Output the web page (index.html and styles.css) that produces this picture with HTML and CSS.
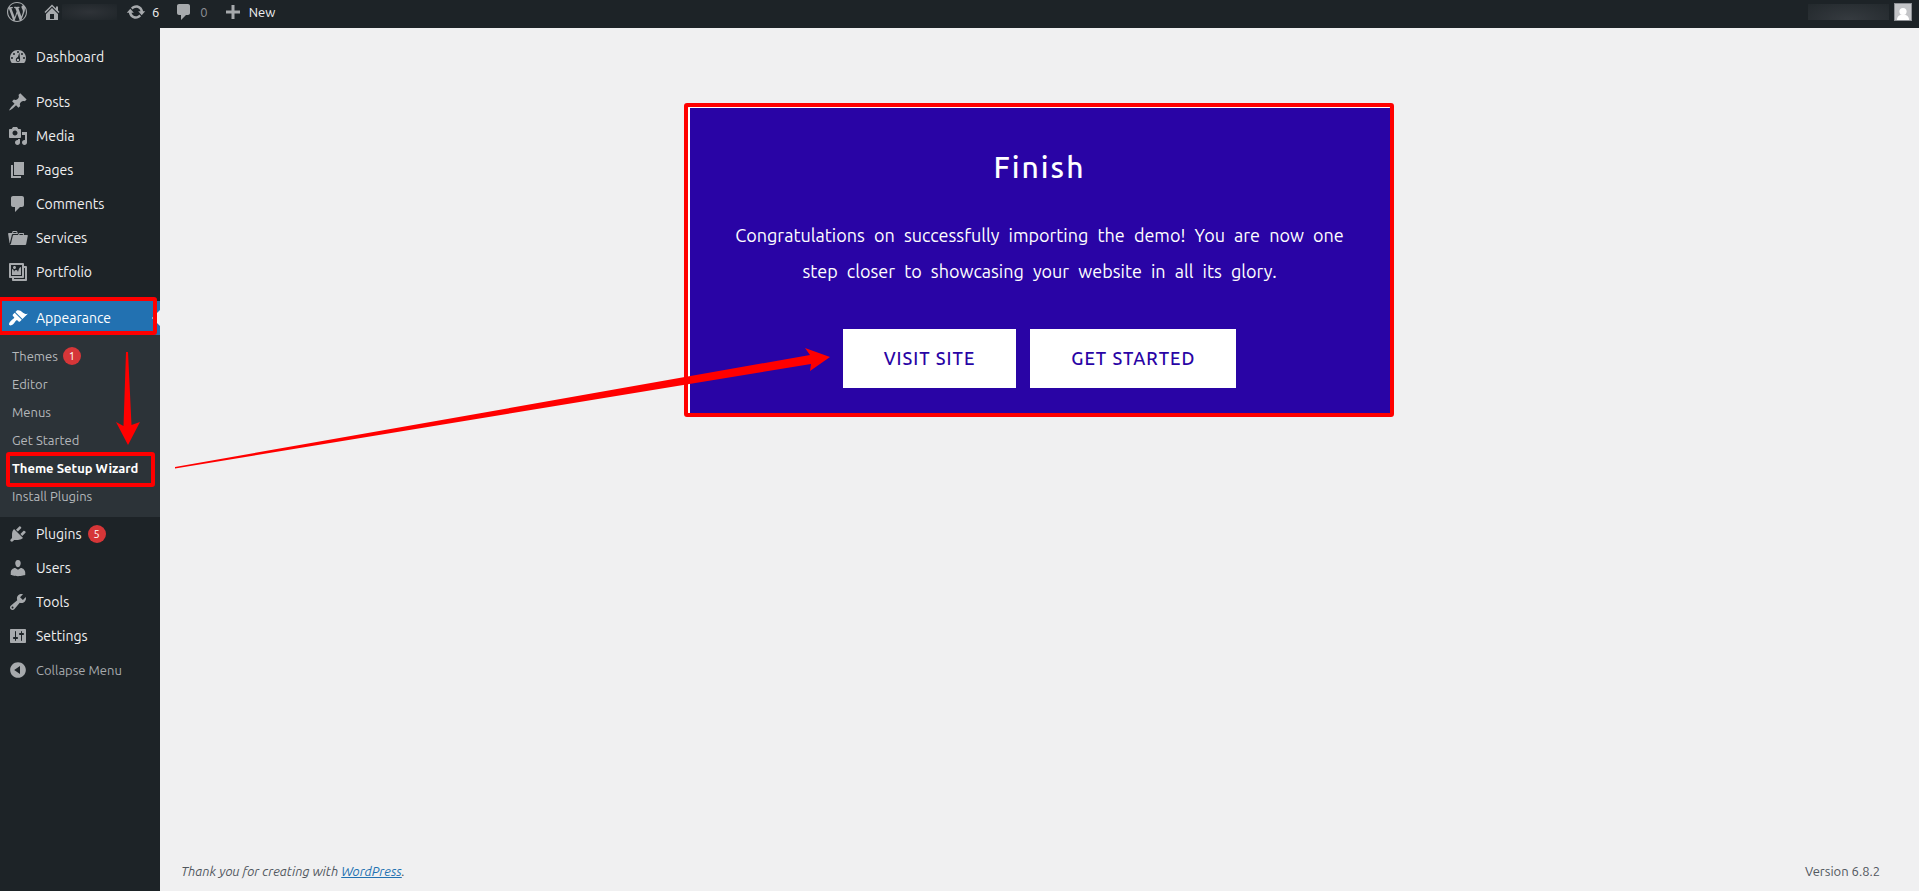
FILE: index.html
```html
<!DOCTYPE html>
<html lang="en">
  <head>
    <meta charset="UTF-8" />
    <meta name="viewport" content="width=device-width, initial-scale=1.0" />
    <title>Theme Setup Wizard</title>
    <link rel="stylesheet" href="styles.css" />
  </head>
  <body>
    <header class="adminbar">
      <a class="bar-item" href="#about" aria-label="About WordPress">
        <svg class="icon" viewBox="0 0 20 20"><path d="M20 10c0-5.51-4.49-10-10-10C4.48 0 0 4.49 0 10c0 5.52 4.48 10 10 10 5.51 0 10-4.48 10-10zM7.78 15.37L4.37 6.22c.55-.02 1.17-.08 1.17-.08.5-.06.44-1.13-.06-1.11 0 0-1.45.11-2.37.11-.18 0-.37 0-.58-.01C4.12 2.69 6.87 1.11 10 1.11c2.33 0 4.45.87 6.05 2.34-.68-.11-1.65.39-1.65 1.58 0 .74.45 1.36.9 2.1.35.61.55 1.36.55 2.46 0 1.49-1.4 5-1.4 5l-3.03-8.37c.54-.02.82-.17.82-.17.5-.05.44-1.25-.06-1.22 0 0-1.44.12-2.38.12-.87 0-2.33-.12-2.33-.12-.5-.03-.56 1.2-.06 1.22l.92.08 1.26 3.41zM17.41 10c.24-.64.74-1.87.43-4.25.7 1.29 1.05 2.71 1.05 4.25 0 3.29-1.73 6.24-4.4 7.78.97-2.59 1.94-5.2 2.92-7.78zM6.1 18.09C3.12 16.65 1.11 13.53 1.11 10c0-1.3.23-2.48.72-3.59C3.25 10.3 4.67 14.2 6.1 18.09zm4.03-6.63l2.58 6.98c-.86.29-1.76.45-2.71.45-.79 0-1.57-.11-2.29-.33.81-2.38 1.62-4.74 2.42-7.1z"/></svg>
      </a>
      <a class="bar-item bar-site" href="#site" aria-label="Visit site">
        <svg class="icon" viewBox="0 0 20 20"><path fill-rule="evenodd" d="M16 8.5l1.53 1.53-1.06 1.06L10 4.6l-6.47 6.49-1.06-1.06L10 2.5l4 4v-2h2v4zm-6-2.46l6 5.99V18H4v-5.97zM12 17v-5H8v5h4z"/></svg>
        <span class="redacted"></span>
      </a>
      <a class="bar-item" href="#updates">
        <svg class="icon" viewBox="0 0 20 20"><path d="M10.2 3.28c3.53 0 6.43 2.61 6.92 6h2.08l-3.5 4-3.5-4h2.32c-.45-1.97-2.21-3.45-4.32-3.45-1.45 0-2.73.71-3.54 1.78L4.95 5.66C6.23 4.2 8.11 3.28 10.2 3.28zm-.4 13.44c-3.52 0-6.43-2.61-6.92-6H.8l3.5-4c1.17 1.33 2.33 2.67 3.5 4H5.48c.45 1.97 2.21 3.45 4.32 3.45 1.45 0 2.73-.71 3.54-1.78l1.71 1.95c-1.28 1.46-3.15 2.38-5.25 2.38z"/></svg>
        <span>6</span>
      </a>
      <a class="bar-item" href="#comments">
        <svg class="icon" viewBox="0 0 20 20"><path d="M5 2h9c1.1 0 2 .9 2 2v7c0 1.1-.9 2-2 2h-2l-5 5v-5H5c-1.1 0-2-.9-2-2V4c0-1.1.9-2 2-2z"/></svg>
        <span class="muted">0</span>
      </a>
      <a class="bar-item" href="#new">
        <svg class="icon" viewBox="0 0 20 20"><path d="M17 8.5v3h-5.500v5.500h-3v-5.500H3v-3h5.500V3h3v5.500z"/></svg>
        <span>New</span>
      </a>
      <a class="bar-account" href="#profile" aria-label="Profile">
        <span class="redacted redacted-name"></span>
        <svg class="avatar" viewBox="0 0 18 18"><path fill="#8c8f94" d="M0 0h18v18H0z"/><path fill="#c3c4c7" d="M1 1h16v16H1z"/><circle cx="9" cy="8.500" r="3.600" fill="#fff"/><path fill="#fff" d="M3 17c0-4 3-5.500 6-5.500s6 1.500 6 5.500z"/></svg>
      </a>
    </header>

    <div class="layout">
      <nav class="sidebar">
        <ul class="menu">
          <li>
            <a class="menu-link" href="#dashboard">
              <svg class="icon" viewBox="0 0 20 20"><path fill-rule="evenodd" d="M3.760 16h12.480A7.900 7.900 0 0 0 18 11c0-4.500-3.600-8-8-8s-8 3.500-8 8c0 1.900.7 3.600 1.760 5zM10 4a1 1 0 1 1 0 2 1 1 0 0 1 0-2zM6 6a1 1 0 1 1 0 2 1 1 0 0 1 0-2zm8 0a1 1 0 1 1 0 2 1 1 0 0 1 0-2zm-2.600-.4L12 11.300c.5 2.300-.5 3.700-2 3.700s-2.700-1.500-2-3.200c.4-1 1.200-1.500 1.900-1.800zM4 10a1 1 0 1 1 0 2 1 1 0 0 1 0-2zm12 0a1 1 0 1 1 0 2 1 1 0 0 1 0-2zm-6 1.800a1.200 1.200 0 1 0 0 2.400 1.200 1.200 0 0 0 0-2.400z"/></svg>
              Dashboard
            </a>
          </li>
          <li class="menu-group">
            <a class="menu-link" href="#posts">
              <svg class="icon" viewBox="0 0 20 20"><path d="M10.44 3.02l1.82-1.82 6.36 6.35-1.83 1.82c-1.05-.68-2.48-.57-3.41.36l-.75.75c-.92.93-1.04 2.35-.35 3.41l-1.83 1.82-2.41-2.41-2.8 2.79c-.42.42-3.38 2.71-3.8 2.29s1.86-3.39 2.28-3.81l2.79-2.79L4.1 9.36l1.83-1.82c1.05.69 2.48.57 3.4-.36l.75-.75c.93-.92 1.05-2.35.36-3.41z"/></svg>
              Posts
            </a>
          </li>
          <li>
            <a class="menu-link" href="#media">
              <svg class="icon" viewBox="0 0 20 20"><path fill-rule="evenodd" d="M13 11V4c0-.55-.45-1-1-1h-1.670L9 1H5L3.670 3H2c-.55 0-1 .45-1 1v7c0 .55.45 1 1 1h10c.55 0 1-.45 1-1zM7 4.500c1.380 0 2.500 1.120 2.500 2.500S8.380 9.500 7 9.500 4.500 8.380 4.500 7 5.620 4.500 7 4.500zM14 6h5v10.500c0 1.380-1.120 2.500-2.500 2.500S14 17.880 14 16.500s1.120-2.500 2.500-2.500c.17 0 .34.02.5.05V9h-3V6zm-4 8.050V13h2v3.500c0 1.380-1.120 2.500-2.500 2.500S7 17.880 7 16.500 8.120 14 9.500 14c.17 0 .34.02.5.05z"/></svg>
              Media
            </a>
          </li>
          <li>
            <a class="menu-link" href="#pages">
              <svg class="icon" viewBox="0 0 20 20"><path d="M6 15V2h10v13H6zm-1 1h8v2H3V5h2v11z"/></svg>
              Pages
            </a>
          </li>
          <li>
            <a class="menu-link" href="#comments">
              <svg class="icon" viewBox="0 0 20 20"><path d="M5 2h9c1.100 0 2 .9 2 2v7c0 1.100-.9 2-2 2h-2l-5 5v-5H5c-1.100 0-2-.9-2-2V4c0-1.100.9-2 2-2z"/></svg>
              Comments
            </a>
          </li>
          <li>
            <a class="menu-link" href="#services">
              <svg class="icon" viewBox="0 0 20 20"><path fill-rule="evenodd" d="M4 5H.78c-.37 0-.74.32-.69.84l1.56 9.99S3.5 8.47 3.86 6.7c.11-.53.61-.7.98-.7H10s-.7-2.08-.77-2.31C9.11 3.25 8.89 3 8.45 3H5.14c-.36 0-.7.23-.8.64C4.25 4.04 4 5 4 5zm4.88 0h-4s.42-1 .87-1h2.13c.48 0 1 1 1 1zM2.67 16.25c-.31.47-.76.75-1.26.75h15.73c.54 0 .92-.31 1.03-.83.44-2.19 1.68-8.44 1.68-8.44.07-.5-.3-.73-.62-.73H16V5.53c0-.16-.26-.53-.66-.53h-3.76c-.52 0-.87.58-.87.58L10 7H5.59c-.32 0-.63.19-.69.5 0 0-1.59 6.7-1.72 7.33-.07.37-.22.99-.51 1.42zM15.38 7H11s.58-1 1.13-1h2.29c.71 0 .96 1 .96 1z"/></svg>
              Services
            </a>
          </li>
          <li>
            <a class="menu-link" href="#portfolio">
              <svg class="icon" viewBox="0 0 20 20"><path fill-rule="evenodd" d="M16 4h1.96c.57 0 1.04.47 1.04 1.04v12.92c0 .57-.47 1.04-1.04 1.04H5.04C4.47 19 4 18.53 4 17.96V16H2.04C1.47 16 1 15.53 1 14.96V2.04C1 1.47 1.47 1 2.04 1h12.92c.57 0 1.04.47 1.04 1.04V4zM3 14h11V3H3v11zm5-8.5C8 4.67 7.33 4 6.5 4S5 4.67 5 5.5 5.67 7 6.5 7 8 6.33 8 5.5zm2 4.5s1-5 3-5v8H4V7c2 0 2 3 2 3s.33-2 2-2 2 2 2 2zm7 7V6h-1v8.96c0 .57-.47 1.04-1.04 1.04H6v1h11z"/></svg>
              Portfolio
            </a>
          </li>
          <li class="current">
            <a class="menu-link" href="#appearance">
              <svg class="icon" viewBox="0 0 20 20"><path d="M14.48 11.06L7.41 3.99l1.5-1.5c.5-.56 2.3-.47 3.51.32 1.21.8 1.43 1.28 2.91 2.1 1.18.64 2.45 1.26 4.45.85zm-.71.71L6.7 4.7 4.93 6.47c-.39.39-.39 1.02 0 1.41l1.06 1.06c.39.39.39 1.03 0 1.42-.6.6-1.43 1.11-2.21 1.69-.35.26-.7.53-1.01.84C1.43 14.23.4 16.08 1.4 17.07c.99 1 2.84-.03 4.18-1.36.31-.31.58-.66.85-1.02.57-.78 1.08-1.61 1.69-2.21.39-.39 1.02-.39 1.41 0l1.06 1.06c.39.39 1.02.39 1.41 0z"/></svg>
              Appearance
              <span class="mark mark-menu"></span>
            </a>
            <ul class="submenu">
              <li><a href="#themes">Themes <span class="count">1</span></a></li>
              <li><a href="#editor">Editor</a></li>
              <li><a href="#menus">Menus</a></li>
              <li><a href="#get-started">Get Started</a></li>
              <li>
                <a class="selected" href="#wizard">Theme Setup Wizard<span class="mark mark-submenu"></span></a>
              </li>
              <li><a href="#install">Install Plugins</a></li>
            </ul>
            <svg class="arrow-down" viewBox="0 0 26 94"><path d="M11 1h2l3.500 73 8.500-3-12 23L1 71l7.500 4z"/></svg>
          </li>
          <li>
            <a class="menu-link" href="#plugins">
              <svg class="icon" viewBox="0 0 20 20"><path d="M13.11 4.36L9.87 7.6 8 5.73l3.24-3.24c.35-.34 1.05-.2 1.56.32.52.51.66 1.21.31 1.55zm-8 1.77l.91-1.12 9.01 9.01-1.19.84c-.71.71-2.63 1.16-3.82 1.16H6.14L4.9 17.26c-.59.59-1.54.59-2.12 0-.59-.58-.59-1.53 0-2.12l1.24-1.24v-3.88c0-1.13.4-3.19 1.09-3.89zm7.26 3.97l3.24-3.24c.34-.35 1.04-.21 1.55.31.52.51.66 1.21.31 1.55l-3.24 3.25z"/></svg>
              <span class="counted">Plugins <span class="count">5</span></span>
            </a>
          </li>
          <li>
            <a class="menu-link" href="#users">
              <svg class="icon" viewBox="0 0 20 20"><path d="M10 9.25c-2.27 0-2.73-3.44-2.73-3.44C7 4.02 7.82 2 9.97 2c2.16 0 2.98 2.02 2.71 3.81 0 0-.41 3.44-2.68 3.44zm0 2.57L12.72 10c2.39 0 4.52 2.33 4.52 4.53v2.49s-3.65 1.13-7.24 1.13c-3.65 0-7.24-1.13-7.24-1.13v-2.49c0-2.25 1.94-4.48 4.47-4.48z"/></svg>
              Users
            </a>
          </li>
          <li>
            <a class="menu-link" href="#tools">
              <svg class="icon" viewBox="0 0 20 20"><path fill-rule="evenodd" d="M16.68 9.77c-1.34 1.34-3.3 1.67-4.95.99l-5.41 6.52c-.99.99-2.59.99-3.58 0s-.99-2.59 0-3.57l6.52-5.42c-.68-1.65-.35-3.61.99-4.95 1.28-1.28 3.12-1.62 4.72-1.06l-2.89 2.89 2.82 2.82 2.86-2.87c.53 1.58.18 3.39-1.08 4.65zM3.81 16.21c.4.39 1.04.39 1.43 0 .4-.4.4-1.04 0-1.43-.39-.4-1.03-.4-1.43 0-.39.39-.39 1.03 0 1.43z"/></svg>
              Tools
            </a>
          </li>
          <li>
            <a class="menu-link" href="#settings">
              <svg class="icon" viewBox="0 0 20 20"><path fill-rule="evenodd" d="M18 16V4c0-.55-.45-1-1-1H3c-.55 0-1 .45-1 1v12c0 .55.45 1 1 1h14c.55 0 1-.45 1-1zM8 11h1c.55 0 1 .45 1 1s-.45 1-1 1H8v1.5c0 .28-.22.5-.5.5s-.5-.22-.5-.5V13H6c-.55 0-1-.45-1-1s.45-1 1-1h1V5.5c0-.28.22-.5.5-.5s.5.22.5.5V11zm5-2h-1c-.55 0-1-.45-1-1s.45-1 1-1h1V5.5c0-.28.22-.5.5-.5s.5.22.5.5V7h1c.55 0 1 .45 1 1s-.45 1-1 1h-1v5.5c0 .28-.22.5-.5.5s-.5-.22-.5-.5V9z"/></svg>
              Settings
            </a>
          </li>
          <li>
            <button class="collapse" type="button">
              <svg class="icon" viewBox="0 0 20 20"><path fill-rule="evenodd" d="M10 2.16c4.33 0 7.84 3.51 7.84 7.84s-3.51 7.84-7.84 7.84S2.16 14.33 2.16 10 5.67 2.16 10 2.16zm2 11.72V6.12L6.18 9.97z"/></svg>
              Collapse Menu
            </button>
          </li>
        </ul>
      </nav>

      <main class="content">
        <section class="card">
          <h1>Finish</h1>
          <p>
            Congratulations on successfully importing the demo! You are now one
            step closer to showcasing your website in all its glory.
          </p>
          <div class="actions">
            <a class="action" href="#visit">Visit Site</a>
            <a class="action" href="#start">Get Started</a>
          </div>
          <span class="mark mark-card"></span>
        </section>

        <footer class="footer">
          <span class="thanks">Thank you for creating with <a href="#wordpress">WordPress</a>.</span>
          <span>Version 6.8.2</span>
        </footer>

        <svg class="arrow-long" viewBox="0 0 656 122"><path d="M1 119L636 7l-5-7 25 9-20 14 1-7L1 120.500z"/></svg>
      </main>
    </div>
  </body>
</html>
```
FILE: styles.css
```css
* {
  box-sizing: border-box;
}

body {
  margin: 0;
  min-height: 100vh;
  display: flex;
  flex-direction: column;
  background: #f0f0f1;
  color: #3c434a;
  font-family: "Ubuntu", "Noto Sans", sans-serif;
  font-size: 13px;
}

ul {
  list-style: none;
  margin: 0;
  padding: 0;
}

a {
  text-decoration: none;
}

.icon {
  width: 20px;
  height: 20px;
  flex: none;
  fill: #a7aaad;
}

/* Admin bar */
.adminbar {
  height: 28px;
  padding: 0 7px 4px;
  display: flex;
  align-items: center;
  background: #1d2327;
}

.bar-item {
  display: flex;
  align-items: center;
  gap: 6px;
  margin-right: 15px;
  color: #f0f0f1;
}

.bar-site {
  gap: 0;
  margin-right: 9px;
}

.muted {
  color: #8c8f94;
}

.redacted {
  width: 55px;
  height: 16px;
  background: radial-gradient(ellipse at center, #2f3338, #1f2529);
}

.redacted-name {
  width: 81px;
  background: radial-gradient(ellipse at bottom, #363b40, #23292d);
}

.bar-account {
  display: flex;
  align-items: center;
  gap: 5px;
  margin-left: auto;
}

.avatar {
  width: 18px;
  height: 18px;
}

/* Sidebar */
.layout {
  flex: 1;
  display: flex;
}

.sidebar {
  width: 160px;
  flex: none;
  padding-top: 12px;
  background: #1d2327;
}

.menu-group {
  margin-top: 11px;
}

.menu-link,
.collapse {
  position: relative;
  width: 100%;
  height: 34px;
  padding: 0 8px;
  display: flex;
  align-items: center;
  gap: 8px;
  color: #f0f0f1;
  font-size: 14px;
}

.collapse {
  border: none;
  background: none;
  color: #a7aaad;
  font-family: inherit;
  font-size: 13px;
  cursor: pointer;
}

.menu-link:hover {
  color: #72aee6;
}

.current {
  position: relative;
  margin-top: 12px;
}

.current .menu-link {
  background: #2271b1;
  color: #fff;
}

.current .menu-link .icon {
  fill: #fff;
}

.current .menu-link::after {
  content: "";
  position: absolute;
  right: 0;
  top: 9px;
  border: 8px solid transparent;
  border-left: none;
  border-right-color: #f0f0f1;
}

.submenu {
  padding: 7px 0;
  background: #2c3338;
}

.submenu a {
  position: relative;
  height: 28px;
  padding: 0 12px;
  display: flex;
  align-items: center;
  gap: 5px;
  color: #b5b8bb;
  white-space: nowrap;
}

.submenu .selected {
  color: #fff;
  font-weight: 600;
}

.counted {
  display: flex;
  align-items: center;
  gap: 6px;
}

.count {
  width: 18px;
  height: 18px;
  border-radius: 9px;
  background: #d63638;
  color: #fff;
  font-size: 11px;
  line-height: 18px;
  text-align: center;
}

/* Red guide marks */
.mark {
  position: absolute;
  z-index: 1;
  border: 4px solid #f00;
  border-radius: 3px;
  pointer-events: none;
}

.mark-menu {
  inset: -4px 3px 0 -2px;
}

.mark-submenu {
  inset: -2px 5px -5px 6px;
}

.mark-card {
  inset: -5px -4px -4px -6px;
}

.arrow-down,
.arrow-long {
  position: absolute;
  z-index: 2;
  fill: #f00;
  pointer-events: none;
}

.arrow-down {
  top: 50px;
  left: 115px;
  width: 26px;
  height: 94px;
}

.arrow-long {
  top: 320px;
  left: 14px;
  width: 656px;
  height: 122px;
}

/* Content */
.content {
  position: relative;
  flex: 1;
  display: flex;
  flex-direction: column;
}

.card {
  position: relative;
  width: 100%;
  max-width: 700px;
  margin: 80px auto 0;
  padding: 39px 40px 25px;
  background: #2904a5;
  box-shadow: -1px -1px #fff, -2px 0 #fff;
  color: #fff;
  text-align: center;
}

.card h1 {
  margin: 0;
  font-size: 30px;
  font-weight: 500;
  letter-spacing: 2px;
  line-height: 40px;
}

.card p {
  margin: 30px 0 40px;
  font-size: 18px;
  line-height: 36px;
  word-spacing: 5px;
}

.actions {
  display: flex;
  justify-content: center;
  gap: 14px;
}

.action {
  padding: 0 41px;
  background: #fff;
  color: #2904a5;
  font-size: 18px;
  font-weight: 500;
  letter-spacing: 1px;
  line-height: 59px;
  text-transform: uppercase;
}

.footer {
  margin-top: auto;
  padding: 10px 39px 10px 21px;
  display: flex;
  justify-content: space-between;
  line-height: 20px;
  color: #50575e;
}

.thanks {
  font-style: italic;
}

.thanks a {
  color: #2271b1;
  text-decoration: underline;
}
```
